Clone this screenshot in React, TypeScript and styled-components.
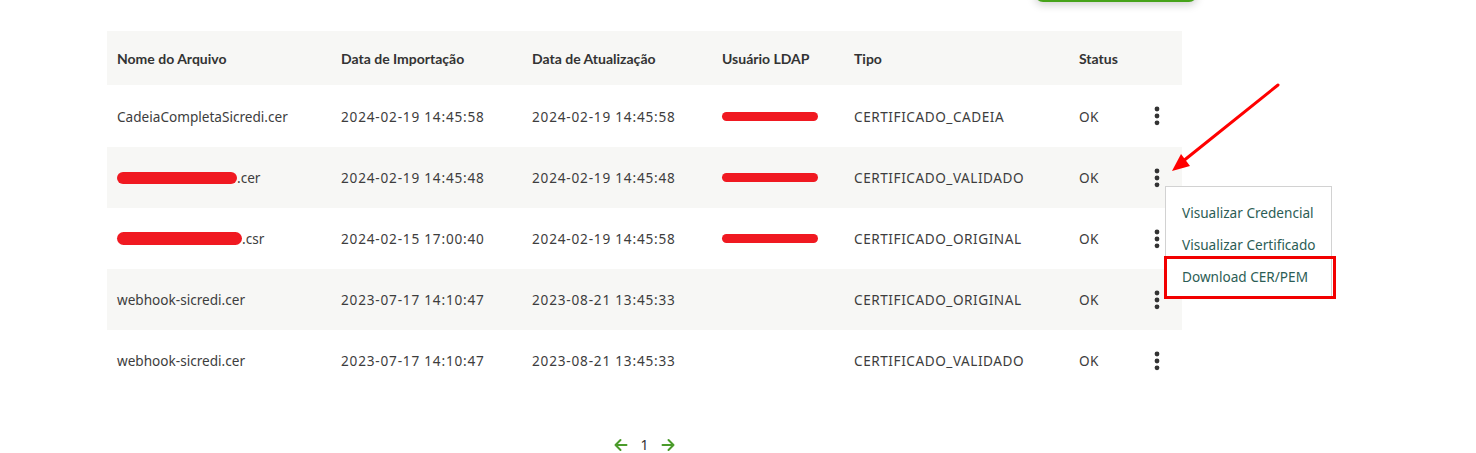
import React from "react";
import styled, { createGlobalStyle } from "styled-components";

const Global = createGlobalStyle`
  html, body { margin: 0; padding: 0; background: #fff; }
  body { font-family: "Noto Sans", "Open Sans", sans-serif; color: #3b3b3b; }
`;

const Page = styled.div`
  width: 1476px;
  height: 453px;
  overflow: hidden;
  position: relative;
`;

const Content = styled.div`
  margin-left: 107px;
  width: 1090px;
  display: flex;
  flex-direction: column;
`;

const TopBar = styled.div`
  display: flex;
  justify-content: flex-end;
`;

const GreenButton = styled.button`
  width: 162px;
  height: 40px;
  margin-top: -38px;
  border: none;
  border-radius: 8px;
  background: #46a31a;
  box-shadow: 0 3px 8px rgba(0, 0, 0, 0.18);
`;

const Table = styled.div`
  margin-top: 29px;
  width: 1075px;
  display: grid;
  grid-template-columns: 224px 191px 190px 132px 225px 70px 1fr;
  position: relative;
`;

const Row = styled.div<{ $shaded?: boolean; $h: number }>`
  display: contents;
  & > div {
    background: ${(p) => (p.$shaded ? "#f7f7f5" : "#fff")};
    height: ${(p) => p.$h}px;
  }
`;

const Cell = styled.div<{ $head?: boolean; $ls?: number }>`
  display: flex;
  align-items: center;
  padding-left: 10px;
  font-family: ${(p) => (p.$head ? `"Lato", "Noto Sans", sans-serif` : `"Noto Sans", sans-serif`)};
  font-size: ${(p) => (p.$head ? "14px" : "13.6px")};
  font-weight: ${(p) => (p.$head ? 700 : 400)};
  letter-spacing: ${(p) => p.$ls ?? 0}px;
  color: ${(p) => (p.$head ? "#333" : "#3d3d3d")};
  white-space: nowrap;
  position: relative;
`;

const Redact = styled.span<{ $w: number; $h: number }>`
  display: inline-block;
  width: ${(p) => p.$w}px;
  height: ${(p) => p.$h}px;
  background: #f01921;
  border-radius: ${(p) => p.$h / 2}px;
`;

const Kebab = styled.button`
  border: none;
  background: transparent;
  padding: 0;
  margin-left: 4px;
  display: flex;
  width: 8px;
  height: 20px;
`;

const Menu = styled.div`
  position: absolute;
  top: 155px;
  left: 1058px;
  width: 167px;
  padding: 9px 0 6px;
  background: #fff;
  border: 1px solid #d2d2d2;
  box-sizing: border-box;
  z-index: 2;
`;

const MenuItem = styled.div`
  height: 32px;
  display: flex;
  align-items: center;
  padding-left: 16px;
  font-size: 13.6px;
  color: #2c5d55;
  white-space: nowrap;
`;

const Highlight = styled.div`
  position: absolute;
  top: 225px;
  left: 1057px;
  width: 172px;
  height: 43px;
  border: 3px solid #f20000;
  box-sizing: border-box;
  z-index: 3;
`;

const ArrowOverlay = styled.svg`
  position: absolute;
  left: 1160px;
  top: 80px;
  z-index: 3;
`;

const Pager = styled.div`
  margin-top: 44px;
  width: 1075px;
  display: flex;
  justify-content: center;
  align-items: center;
  gap: 12px;
  font-size: 14px;
  color: #333;
`;

const PagerArrow = styled.button`
  border: none;
  background: transparent;
  padding: 0;
  display: flex;
`;

const Dots = () => (
  <svg width="8" height="20" viewBox="0 0 8 20">
    <circle cx="4" cy="3" r="2.4" fill="#333" />
    <circle cx="4" cy="10" r="2.4" fill="#333" />
    <circle cx="4" cy="16.8" r="2.4" fill="#333" />
  </svg>
);

const LeftArrow = () => (
  <svg width="14" height="14" viewBox="0 0 14 14" fill="none" stroke="#4a9b2a" strokeWidth="2" strokeLinecap="round" strokeLinejoin="round">
    <path d="M12.5 7H1.5M6.5 2L1.5 7l5 5" />
  </svg>
);

const RightArrow = () => (
  <svg width="14" height="14" viewBox="0 0 14 14" fill="none" stroke="#4a9b2a" strokeWidth="2" strokeLinecap="round" strokeLinejoin="round">
    <path d="M1.5 7h11M7.5 2l5 5-5 5" />
  </svg>
);

type Rec = {
  name: React.ReactNode;
  imp: string;
  upd: string;
  ldap: boolean;
  tipo: string;
};

const rows: Rec[] = [
  { name: "CadeiaCompletaSicredi.cer", imp: "2024-02-19 14:45:58", upd: "2024-02-19 14:45:58", ldap: true, tipo: "CERTIFICADO_CADEIA" },
  { name: <><Redact $w={120} $h={12} />.cer</>, imp: "2024-02-19 14:45:48", upd: "2024-02-19 14:45:48", ldap: true, tipo: "CERTIFICADO_VALIDADO" },
  { name: <><Redact $w={125} $h={13} />.csr</>, imp: "2024-02-15 17:00:40", upd: "2024-02-19 14:45:58", ldap: true, tipo: "CERTIFICADO_ORIGINAL" },
  { name: "webhook-sicredi.cer", imp: "2023-07-17 14:10:47", upd: "2023-08-21 13:45:33", ldap: false, tipo: "CERTIFICADO_ORIGINAL" },
  { name: "webhook-sicredi.cer", imp: "2023-07-17 14:10:47", upd: "2023-08-21 13:45:33", ldap: false, tipo: "CERTIFICADO_VALIDADO" },
];

const heights = [62, 61, 61, 61, 61];

export default function App() {
  return (
    <Page>
      <Global />
      <Content>
        <TopBar>
          <GreenButton aria-label="Importar" />
        </TopBar>
        <Table>
          <Row $shaded $h={54}>
            <Cell $head>Nome do Arquivo</Cell>
            <Cell $head>Data de Importação</Cell>
            <Cell $head>Data de Atualização</Cell>
            <Cell $head>Usuário LDAP</Cell>
            <Cell $head>Tipo</Cell>
            <Cell $head>Status</Cell>
            <Cell $head />
          </Row>
          {rows.map((r, i) => (
            <Row key={i} $shaded={i % 2 === 1} $h={heights[i]}>
              <Cell>{r.name}</Cell>
              <Cell $ls={0.8}>{r.imp}</Cell>
              <Cell $ls={0.8}>{r.upd}</Cell>
              <Cell>{r.ldap ? <Redact $w={96} $h={9} /> : null}</Cell>
              <Cell $ls={0.55}>{r.tipo}</Cell>
              <Cell $ls={0.4}>OK</Cell>
              <Cell>
                <Kebab aria-label="Ações">
                  <Dots />
                </Kebab>
              </Cell>
            </Row>
          ))}
          <Menu>
            <MenuItem>Visualizar Credencial</MenuItem>
            <MenuItem>Visualizar Certificado</MenuItem>
            <MenuItem>Download CER/PEM</MenuItem>
          </Menu>
          <Highlight />
        </Table>
        <Pager>
          <PagerArrow aria-label="Anterior">
            <LeftArrow />
          </PagerArrow>
          <span>1</span>
          <PagerArrow aria-label="Próxima">
            <RightArrow />
          </PagerArrow>
        </Pager>
      </Content>
      <ArrowOverlay width="130" height="100" viewBox="0 0 130 100">
        <line x1="118" y1="5" x2="22" y2="82" stroke="#f00" strokeWidth="3" strokeLinecap="round" />
        <polygon points="12,91 21,74 30,86" fill="#f00" />
      </ArrowOverlay>
    </Page>
  );
}
